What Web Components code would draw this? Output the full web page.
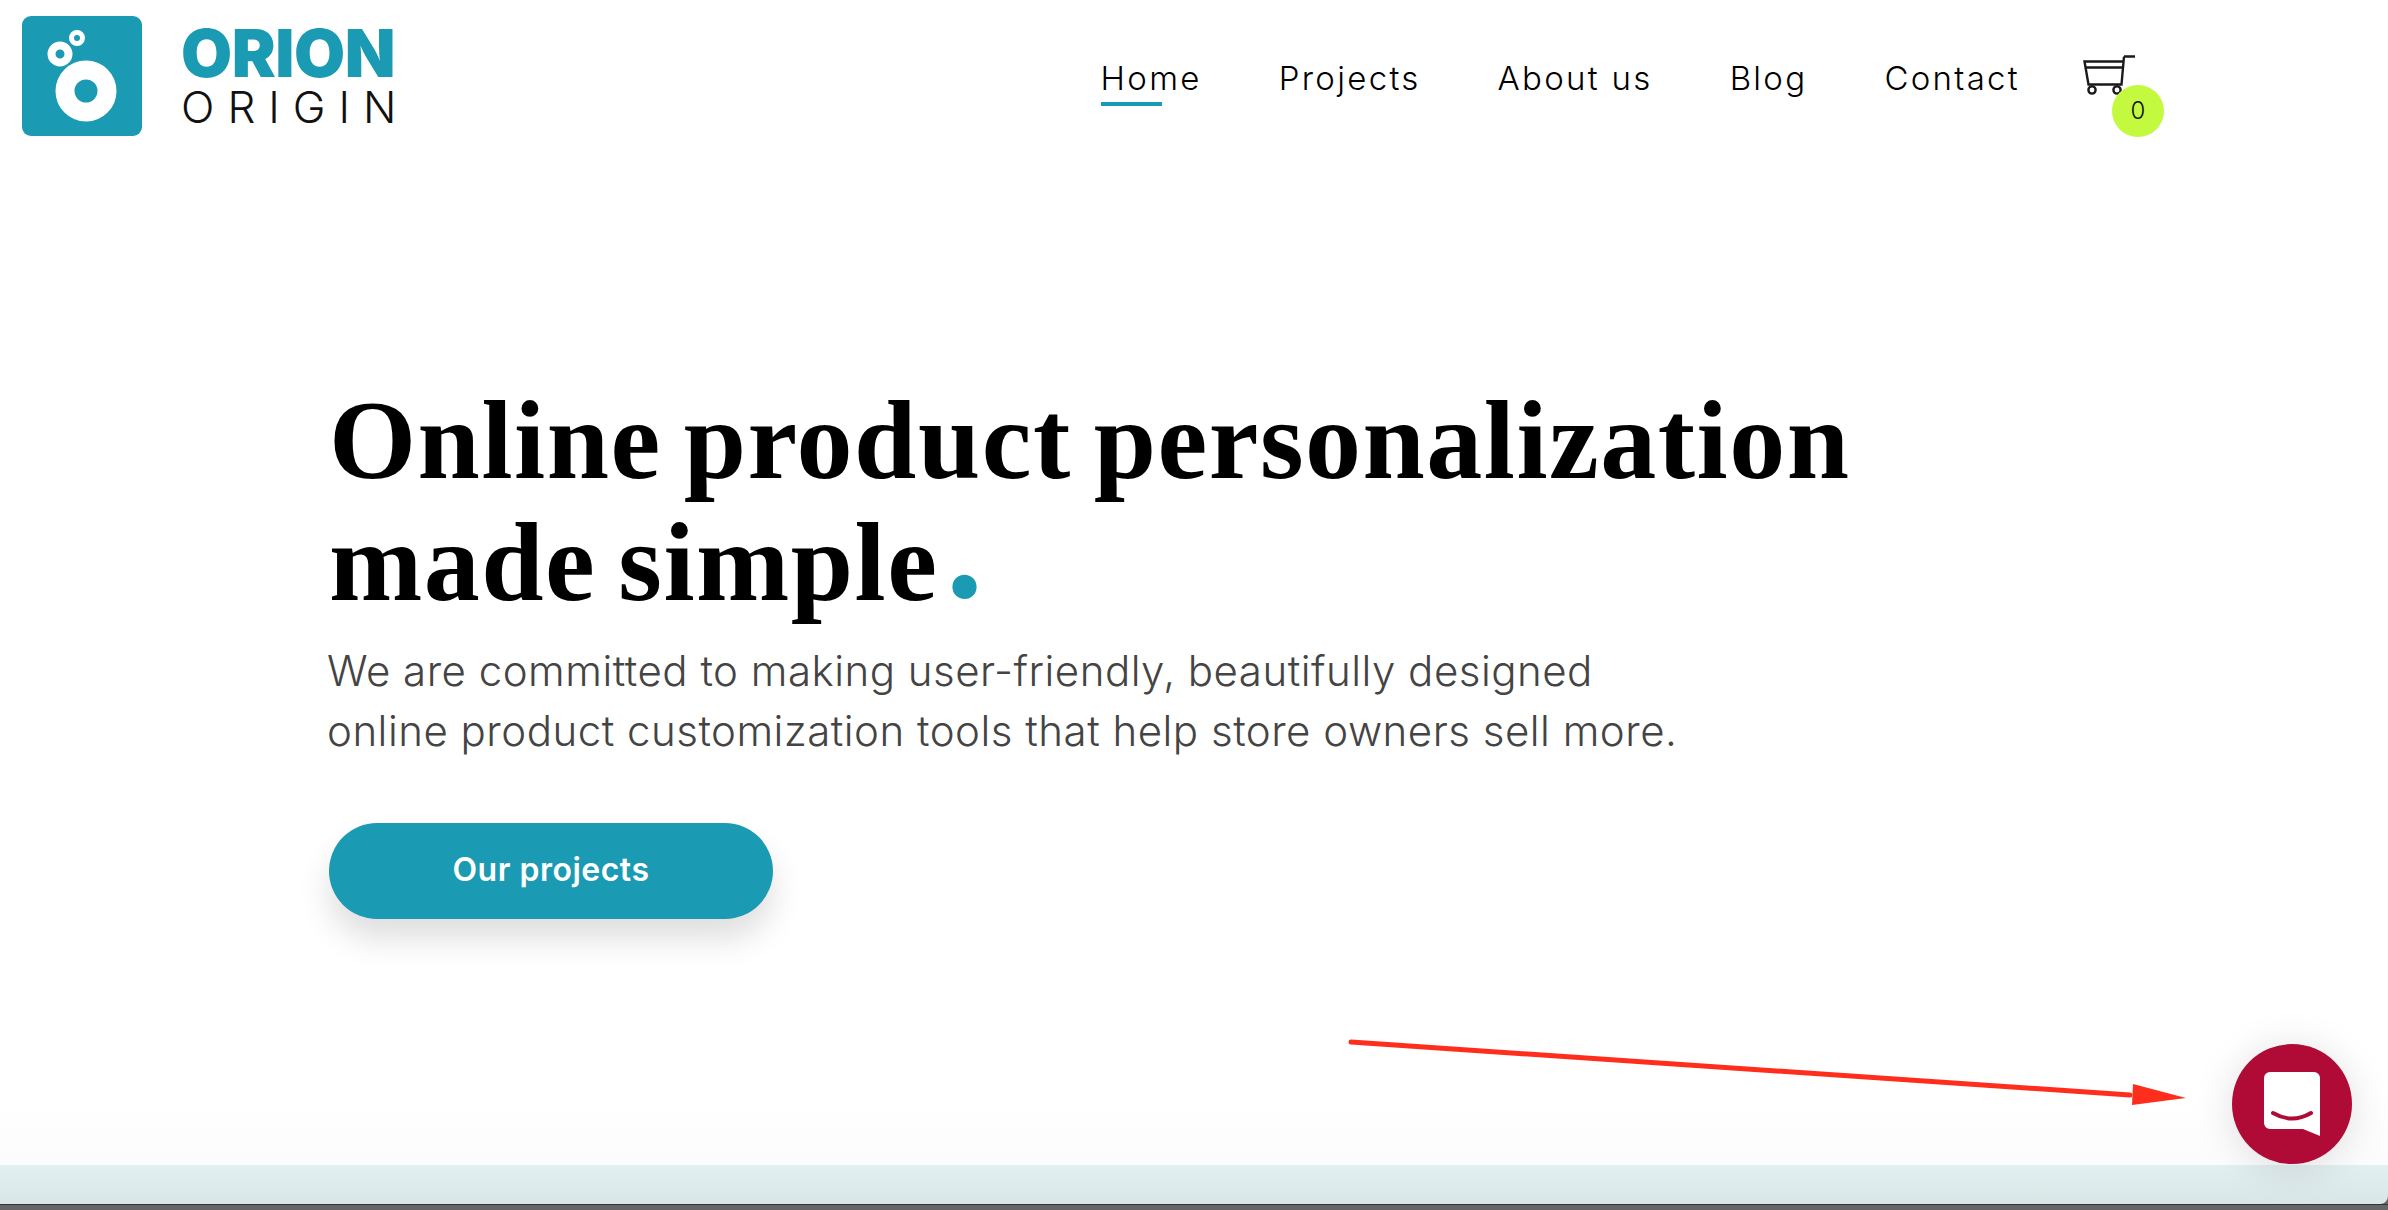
<!DOCTYPE html>
<html lang="en">
<head>
<meta charset="utf-8">
<title>Orion Origin</title>
<style>
html, body { margin: 0; height: 100%; background: #fff; }
body { font-family: "Inter", "Liberation Sans", sans-serif; overflow: hidden; }
</style>
</head>
<body>
<site-page>
	<site-header slot="header">
		<nav-link active>Home</nav-link>
		<nav-link>Projects</nav-link>
		<nav-link>About us</nav-link>
		<nav-link>Blog</nav-link>
		<nav-link>Contact</nav-link>
		<cart-button count="0"></cart-button>
	</site-header>
	<hero-section slot="hero">
		<span slot="title">Online product personalization<br>made simple</span>
		<span slot="text">We are committed to making user-friendly, beautifully designed<br>online product customization tools that help store owners sell more.</span>
		<span slot="action">Our projects</span>
	</hero-section>
	<annotation-arrow slot="overlay"></annotation-arrow>
	<chat-launcher slot="overlay"></chat-launcher>
</site-page>

<script>
class SitePage extends HTMLElement {
	constructor() {
		super().attachShadow({ mode: "open" }).innerHTML = `
<style>
:host {
	display: flex;
	flex-direction: column;
	position: relative;
	height: 1210px;
	overflow: hidden;
	background: linear-gradient(#fff 1100px, #fcfcfc 1165px);
}
main { flex: 1; }
.band {
	height: 39px;
	background: linear-gradient(#e3f0f1, #d9e6e6);
	border-bottom-right-radius: 8px;
}
.edge {
	height: 6px;
	background: #666;
	border-top: 1px solid #333;
	box-sizing: border-box;
}
.foot { background: #666; }
</style>
<slot name="header"></slot>
<main><slot name="hero"></slot></main>
<div class="foot"><div class="band"></div></div>
<div class="edge"></div>
<slot name="overlay"></slot>`;
	}
}
customElements.define("site-page", SitePage);

class SiteHeader extends HTMLElement {
	constructor() {
		super().attachShadow({ mode: "open" }).innerHTML = `
<style>
:host {
	display: flex;
	align-items: flex-start;
	justify-content: space-between;
	padding: 16px 253px 0 22px;
	height: 120px;
}
.brand { display: flex; gap: 39px; }
.mark { width: 120px; height: 120px; display: block; }
.words { display: flex; flex-direction: column; width: 220px; padding-top: 8px; }
.orion {
	font: 900 66px/58px "Inter", sans-serif;
	letter-spacing: -0.5px;
	color: #1a9ab3;
}
.origin {
	font: 300 44px/50px "Inter", sans-serif;
	letter-spacing: 13px;
	color: #111;
}
nav { display: flex; align-items: flex-start; gap: 77px; padding-top: 42px; }
</style>
<div class="brand">
	<svg class="mark" viewBox="0 0 120 120">
		<rect width="120" height="120" rx="9" fill="#1a9ab3"/>
		<circle cx="64" cy="75" r="21" fill="none" stroke="#fff" stroke-width="19"/>
		<circle cx="38" cy="38" r="8.5" fill="none" stroke="#fff" stroke-width="8"/>
		<circle cx="55" cy="22" r="5.5" fill="none" stroke="#fff" stroke-width="5"/>
	</svg>
	<div class="words"><span class="orion">ORION</span><span class="origin">ORIGIN</span></div>
</div>
<nav><slot></slot></nav>`;
	}
}
customElements.define("site-header", SiteHeader);

class NavLink extends HTMLElement {
	constructor() {
		super().attachShadow({ mode: "open" }).innerHTML = `
<style>
:host {
	display: block;
	position: relative;
	font: 300 33px/40px "Inter", sans-serif;
	letter-spacing: 2.3px;
	color: #000;
	white-space: nowrap;
}
:host([active])::after {
	content: "";
	position: absolute;
	left: 0;
	top: 44px;
	width: 61px;
	height: 4px;
	background: #1a9ab3;
}
</style>
<slot></slot>`;
	}
}
customElements.define("nav-link", NavLink);

class CartButton extends HTMLElement {
	constructor() {
		super().attachShadow({ mode: "open" }).innerHTML = `
<style>
:host {
	display: block;
	position: relative;
	width: 52px;
	height: 40px;
	margin-top: -3px;
	margin-left: -14px;
}
svg { display: block; }
.count {
	position: absolute;
	left: 29px;
	top: 30px;
	width: 52px;
	height: 52px;
	border-radius: 50%;
	background: #c3f93f;
	font: 300 24px/52px "Inter", sans-serif;
	text-align: center;
	color: #111;
}
</style>
<svg width="52" height="40" viewBox="0 0 52 40" fill="none" stroke="#1a1a1a" stroke-width="2.4">
	<path d="M41 1.5h11M41 1.5l-2.500 28H5.500L1.500 6.500h38.500"/>
	<path d="M2.500 12.500h37"/>
	<circle cx="9" cy="35" r="3.600"/>
	<circle cx="34" cy="35" r="3.600"/>
</svg>
<span class="count"></span>`;
	}
	connectedCallback() {
		this.shadowRoot.querySelector(".count").textContent = this.getAttribute("count");
	}
}
customElements.define("cart-button", CartButton);

class HeroSection extends HTMLElement {
	constructor() {
		super().attachShadow({ mode: "open" }).innerHTML = `
<style>
:host { display: block; padding: 243px 0 0 329px; }
h1 {
	margin: 0;
	font: 700 112px/122px "Liberation Serif", serif;
	letter-spacing: 1.5px;
	word-spacing: -7.5px;
	color: #000;
}
.dot {
	color: #1a9ab3;
	-webkit-text-stroke: 6px #1a9ab3;
	line-height: 0;
	margin-left: 12px;
	vertical-align: 6px;
}
p {
	margin: 18px 0 0 -2px;
	font: 350 42px/60px "Inter", sans-serif;
	color: #444;
	letter-spacing: 0.5px;
	white-space: nowrap;
}
.cta {
	display: flex;
	align-items: center;
	justify-content: center;
	box-sizing: border-box;
	margin-top: 62px;
	padding-bottom: 3px;
	width: 444px;
	height: 96px;
	border-radius: 48px;
	background: #1a9ab3;
	box-shadow: 0 20px 32px rgba(0, 0, 0, .13);
	font: 600 32px/40px "Inter", sans-serif;
	letter-spacing: 0.5px;
	color: #fff;
}
</style>
<h1><slot name="title"></slot><span class="dot">.</span></h1>
<p><slot name="text"></slot></p>
<div class="cta"><slot name="action"></slot></div>`;
	}
}
customElements.define("hero-section", HeroSection);

class AnnotationArrow extends HTMLElement {
	constructor() {
		super().attachShadow({ mode: "open" }).innerHTML = `
<style>
:host { position: absolute; left: 1340px; top: 1030px; width: 860px; height: 90px; }
svg { display: block; }
</style>
<svg width="860" height="90" viewBox="0 0 860 90">
	<path d="M11 12L790 65" stroke="#ff2d1c" stroke-width="5" stroke-linecap="round"/>
	<path d="M793 54L846 68L792 75Z" fill="#ff2d1c"/>
</svg>`;
	}
}
customElements.define("annotation-arrow", AnnotationArrow);

class ChatLauncher extends HTMLElement {
	constructor() {
		super().attachShadow({ mode: "open" }).innerHTML = `
<style>
:host {
	position: absolute;
	left: 2232px;
	top: 1044px;
	width: 120px;
	height: 120px;
	border-radius: 50%;
	background: #b00a36;
	box-shadow: 0 4px 40px rgba(0, 0, 0, .13);
	display: flex;
	align-items: center;
	justify-content: center;
}
svg { display: block; }
</style>
<svg width="56" height="64" viewBox="0 0 56 64">
	<path d="M6 0H50A6 6 0 0 1 56 6V64L39 57H6A6 6 0 0 1 0 51V6A6 6 0 0 1 6 0Z" fill="#fff"/>
	<path d="M9 41Q28 52 47 41" fill="none" stroke="#b00a36" stroke-width="4" stroke-linecap="round"/>
</svg>`;
	}
}
customElements.define("chat-launcher", ChatLauncher);
</script>
</body>
</html>
